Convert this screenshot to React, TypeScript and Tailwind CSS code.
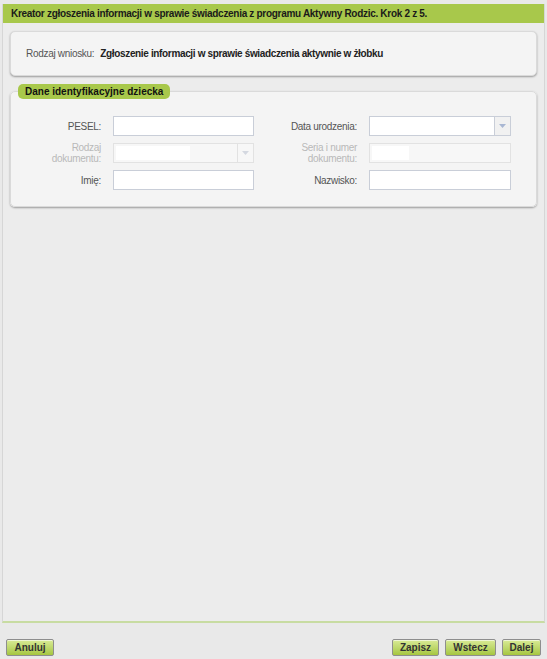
import type { ReactNode } from 'react'

function Label({ children, disabled }: { children: ReactNode; disabled?: boolean }) {
  return (
    <div
      className={`flex items-center justify-end text-right text-[10px] leading-[11px] tracking-[-0.3px] ${
        disabled ? 'text-[#b9b9b9]' : 'text-[#555]'
      }`}
    >
      {children}
    </div>
  )
}

function TextInput() {
  return <div className="h-[20px] border border-[#c9ced8] bg-white" />
}

function DisabledInput() {
  return (
    <div className="h-[20px] border border-[#e2e2e2] bg-[#f7f7f7] p-[2px]">
      <div className="h-[14px] w-[37px] bg-white" />
    </div>
  )
}

function Arrow({ color }: { color: string }) {
  return (
    <svg width="7" height="4" viewBox="0 0 7 4">
      <path d="M0 0h7L3.5 4z" fill={color} />
    </svg>
  )
}

function SelectInput({ disabled }: { disabled?: boolean }) {
  if (disabled) {
    return (
      <div className="flex h-[20px] border border-[#e2e2e2] bg-[#f7f7f7]">
        <div className="flex-1 p-[2px]">
          <div className="h-[14px] w-[74px] bg-white" />
        </div>
        <div className="flex w-[16px] items-center justify-center border-l border-[#e2e2e2]">
          <Arrow color="#d4d8e0" />
        </div>
      </div>
    )
  }
  return (
    <div className="flex h-[20px] border border-[#c9ced8] bg-white">
      <div className="flex-1" />
      <div className="flex w-[16px] items-center justify-center border-l border-[#c9ced8] bg-[#f1f1f1]">
        <Arrow color="#a9b7d3" />
      </div>
    </div>
  )
}

function Button({ children, className }: { children: ReactNode; className: string }) {
  return (
    <button
      className={`h-[17px] rounded-[2px] border border-[#8e8e8e] bg-gradient-to-b from-[#d9eb95] to-[#a6c63f] text-center text-[10px] leading-[15px] font-bold text-[#333] shadow-[inset_0_1px_0_rgba(255,255,255,0.6)] ${className}`}
    >
      {children}
    </button>
  )
}

export default function App() {
  return (
    <div className="flex h-[659px] w-[547px] flex-col bg-[#e9e9e9] font-['Liberation_Sans',sans-serif]">
      {/* Main panel */}
      <div className="mx-[2px] mt-[4px] flex h-[619px] flex-col border-x border-b-2 border-x-[#d6d6d6] border-b-[#c8dca2] bg-[#ececec]">
        <div className="flex h-[19px] items-center bg-[#a8c84b] pl-[8px] text-[10px] font-bold tracking-[-0.3px] text-[#1a1a1a]">
          Kreator zgłoszenia informacji w sprawie świadczenia z programu Aktywny Rodzic. Krok 2 z 5.
        </div>

        {/* Rodzaj wniosku */}
        <div className="mx-[7px] mt-[8px] flex h-[45px] items-center rounded-[5px] border border-[#dadada] bg-[#f4f4f4] pl-[15px] shadow-[0_1px_2px_rgba(0,0,0,0.35)]">
          <span className="text-[10px] tracking-[-0.3px] text-[#555]">Rodzaj wniosku:</span>
          <span className="ml-[6px] text-[10px] font-bold tracking-[-0.35px] text-[#222]">
            Zgłoszenie informacji w sprawie świadczenia aktywnie w żłobku
          </span>
        </div>

        {/* Dane identyfikacyjne dziecka */}
        <fieldset className="mx-[7px] mt-[8px] rounded-[5px] border border-[#dadada] bg-[#f4f4f4] pb-[16px] shadow-[0_1px_2px_rgba(0,0,0,0.35)]">
          <legend className="ml-[7px] h-[15px] rounded-[5px] bg-[#a8c84b] px-[7px] text-[10px] leading-[15px] font-bold text-[#111]">
            Dane identyfikacyjne dziecka
          </legend>
          <div className="mt-[17px] grid grid-cols-[90px_141px_91px_142px] auto-rows-[20px] gap-x-[12px] gap-y-[7px]">
            <Label>PESEL:</Label>
            <TextInput />
            <Label>Data urodzenia:</Label>
            <SelectInput />

            <Label disabled>
              Rodzaj
              <br />
              dokumentu:
            </Label>
            <SelectInput disabled />
            <Label disabled>
              Seria i numer
              <br />
              dokumentu:
            </Label>
            <DisabledInput />

            <Label>Imię:</Label>
            <TextInput />
            <Label>Nazwisko:</Label>
            <TextInput />
          </div>
        </fieldset>
      </div>

      {/* Footer */}
      <div className="mt-[16px] flex items-center px-[6px]">
        <Button className="w-[48px]">Anuluj</Button>
        <div className="flex-1" />
        <div className="flex gap-[6px]">
          <Button className="w-[47px]">Zapisz</Button>
          <Button className="w-[51px]">Wstecz</Button>
          <Button className="w-[39px]">Dalej</Button>
        </div>
      </div>
    </div>
  )
}
